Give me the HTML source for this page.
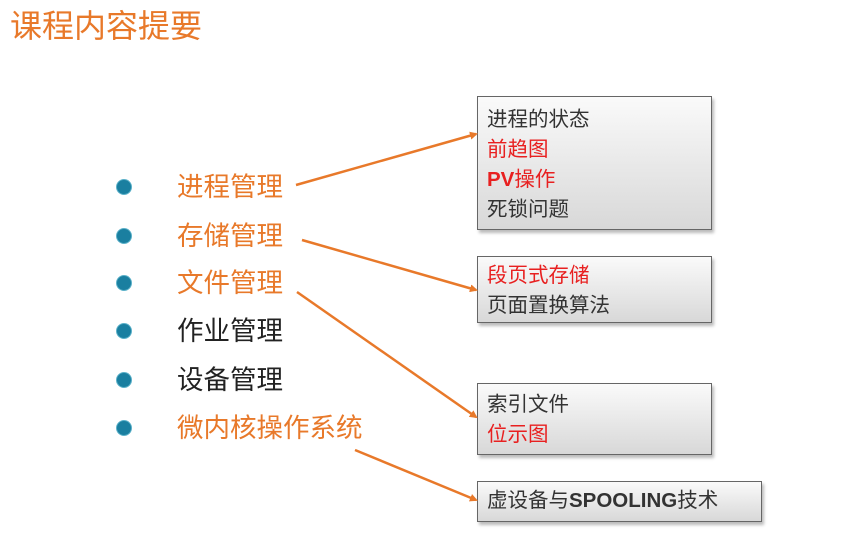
<!DOCTYPE html><html><head><meta charset="utf-8"><style>
body{margin:0;width:851px;height:548px;background:#fff;position:relative;overflow:hidden;font-family:"Liberation Sans","Noto Sans CJK SC",sans-serif}
.t{position:absolute;left:10px;top:1px;font-size:32px;color:#e8792a}
.l{position:absolute;left:177px;font-size:26.5px;line-height:30px}
.o{color:#e8792a}.k{color:#222}
.b{position:absolute;width:14px;height:14px;left:117px;background:#1a7fa0;border-radius:50%;box-shadow:0 0 0 1px #5ab0c8}
.x{position:absolute;left:477px;box-sizing:border-box;border:1px solid #666;background:linear-gradient(#fafafa,#d8d8d8);box-shadow:2px 3px 3px #bbb;padding:6px 9px;font-size:20.5px;line-height:30px;color:#333;white-space:nowrap}
.r{color:#e82020}.bd{font-weight:bold}
</style></head><body>
<div class="t">课程内容提要</div>
<div class="b" style="top:180px"></div><div class="l o" style="top:172px">进程管理</div>
<div class="b" style="top:229px"></div><div class="l o" style="top:221px">存储管理</div>
<div class="b" style="top:276px"></div><div class="l o" style="top:268px">文件管理</div>
<div class="b" style="top:324px"></div><div class="l k" style="top:316px">作业管理</div>
<div class="b" style="top:373px"></div><div class="l k" style="top:365px">设备管理</div>
<div class="b" style="top:421px"></div><div class="l o" style="top:413px">微内核操作系统</div>
<div class="x" style="top:96px;width:235px;height:134px;padding-top:8px">进程的状态<br><span class="r">前趋图</span><br><span class="r bd">PV</span><span class="r">操作</span><br>死锁问题</div>
<div class="x" style="top:256px;width:235px;height:67px;padding-top:4px"><span class="r">段页式存储</span><br>页面置换算法</div>
<div class="x" style="top:383px;width:235px;height:72px;padding-top:6px">索引文件<br><span class="r">位示图</span></div>
<div class="x" style="top:481px;width:285px;height:41px;padding-top:4px"><span>虚设备与</span><span class="bd">SPOOLING</span>技术</div>
<svg width="851" height="548" style="position:absolute;left:0;top:0">
<defs><marker id="a" markerWidth="8" markerHeight="8" refX="6" refY="4" orient="auto" markerUnits="userSpaceOnUse"><path d="M0,0L8,4L0,8Z" fill="#e8792a"/></marker></defs>
<g stroke="#e8792a" stroke-width="2.5" fill="none" marker-end="url(#a)">
<line x1="296" y1="185" x2="476" y2="134"/>
<line x1="302" y1="240" x2="476" y2="290"/>
<line x1="297" y1="292" x2="476" y2="417"/>
<line x1="355" y1="450" x2="476" y2="500"/>
</g></svg>
</body></html>
